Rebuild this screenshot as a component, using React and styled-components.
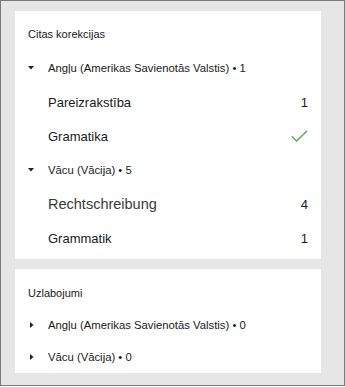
import styled, { createGlobalStyle } from 'styled-components'

const GlobalStyle = createGlobalStyle`
   html, body {
      margin: 0;
      padding: 0;
      background: #ffffff;
   }
   body {
      font-family: 'Liberation Sans', Arial, sans-serif;
   }
`

const groups = [
   {
      title: 'Citas korekcijas',
      languages: [
         {
            name: 'Angļu (Amerikas Savienotās Valstis) • 1',
            open: true,
            items: [
               { label: 'Pareizrakstība', value: '1' },
               { label: 'Gramatika', done: true },
            ],
         },
         {
            name: 'Vācu (Vācija) • 5',
            open: true,
            items: [
               { label: 'Rechtschreibung', value: '4', big: true },
               { label: 'Grammatik', value: '1' },
            ],
         },
      ],
   },
]

function Caret({ open }) {
   return open ? (
      <svg width="6" height="4" viewBox="0 0 6 4">
         <path d="M0 0H6L3 3.5Z" fill="#222" />
      </svg>
   ) : (
      <svg width="4" height="6" viewBox="0 0 4 6">
         <path d="M0 0V6L3.5 3Z" fill="#222" />
      </svg>
   )
}

function Check() {
   return (
      <svg width="17" height="12" viewBox="0 0 17 12">
         <path
            d="M0.8 6.2L5.6 11L16.2 0.8"
            fill="none"
            stroke="#4caf50"
            strokeWidth="1.3"
         />
      </svg>
   )
}

function App() {
   const first = groups[0]
   return (
      <>
         <GlobalStyle />
         <Frame>
            <Card $pad="6px 0 4px">
               <Heading>{first.title}</Heading>
               {first.languages.map((lang) => (
                  <div key={lang.name}>
                     <LangRow>
                        <CaretBox>
                           <Caret open={lang.open} />
                        </CaretBox>
                        {lang.name}
                     </LangRow>
                     {lang.items.map((it) => (
                        <ItemRow key={it.label}>
                           <ItemLabel $big={it.big}>{it.label}</ItemLabel>
                           {it.done ? <Check /> : <Count>{it.value}</Count>}
                        </ItemRow>
                     ))}
                  </div>
               ))}
            </Card>
            <Card $pad="8px 0 0">
               <Heading $h="32px">Uzlabojumi</Heading>
               <LangRow $h="32px">
                  <CaretBox $closed>
                     <Caret />
                  </CaretBox>
                  Angļu (Amerikas Savienotās Valstis) • 0
               </LangRow>
               <LangRow $h="32px">
                  <CaretBox $closed>
                     <Caret />
                  </CaretBox>
                  Vācu (Vācija) • 0
               </LangRow>
            </Card>
         </Frame>
      </>
   )
}

export default App

const Frame = styled.div`
   width: 345px;
   height: 386px;
   box-sizing: border-box;
   border: 1px solid #7a7a7a;
   background: #e6e6e6;
   padding: 10px 23px 12px 14px;
   display: flex;
   flex-direction: column;
   gap: 10px;
`
const Card = styled.div`
   background: #ffffff;
   padding: ${(p) => p.$pad};
   display: flex;
   flex-direction: column;
`
const Heading = styled.div`
   height: ${(p) => p.$h || '34px'};
   display: flex;
   align-items: center;
   padding-left: 13px;
   font-size: 11px;
   color: #1a1a1a;
`
const LangRow = styled.div`
   height: ${(p) => p.$h || '34px'};
   display: flex;
   align-items: center;
   padding-left: 13px;
   font-size: 11.3px;
   color: #1a1a1a;
`
const CaretBox = styled.span`
   width: 20px;
   display: flex;
   padding-left: ${(p) => (p.$closed ? '2px' : '0')};
   box-sizing: border-box;
`
const ItemRow = styled.div`
   height: 34px;
   display: flex;
   align-items: center;
   justify-content: space-between;
   padding: 0 13px 0 33px;
`
const ItemLabel = styled.span`
   font-size: ${(p) => (p.$big ? '14.5px' : '13px')};
   color: ${(p) => (p.$big ? '#3a3a3a' : '#1a1a1a')};
`
const Count = styled.span`
   font-size: 13px;
   color: #1a1a1a;
`
